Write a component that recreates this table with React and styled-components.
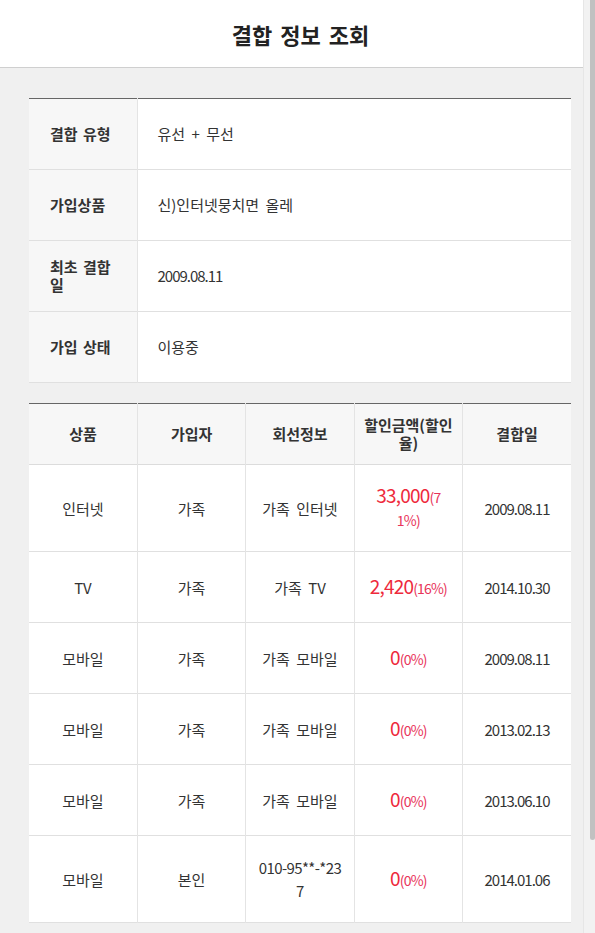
import React from "react";
import styled, { createGlobalStyle } from "styled-components";

const GlobalStyle = createGlobalStyle`
  html, body { margin: 0; padding: 0; background: #f0f0f0; }
  body {
    font-family: "Noto Sans CJK KR", "Noto Sans", sans-serif;
    color: #333;
  }
`;

const Page = styled.div`
  padding-right: 12px;
`;

const ScrollTrack = styled.div`
  position: fixed;
  top: 0;
  right: 0;
  bottom: 0;
  width: 12px;
  box-sizing: border-box;
  background: #f2f2f2;
  border-left: 1px solid #e6e6e6;
  display: flex;
  justify-content: flex-end;
`;

const ScrollThumb = styled.div`
  width: 5px;
  height: 840px;
  background: #c1c1c1;
  border-radius: 0 0 3px 3px;
`;

const Header = styled.header`
  height: 68px;
  box-sizing: border-box;
  padding-left: 18px;
  background: #fff;
  border-bottom: 1px solid #cfcfcf;
  display: flex;
  align-items: center;
  justify-content: center;
`;

const Title = styled.h1`
  margin: 0;
  font-size: 22px;
  font-weight: 700;
  color: #222;
  word-spacing: 3px;
`;

const Content = styled.main`
  padding: 30px 12px 113px 29px;
  display: flex;
  flex-direction: column;
  gap: 20px;
`;

const Table = styled.table`
  width: 100%;
  border-collapse: collapse;
  table-layout: fixed;
  background: #fff;
  border-top: 1px solid #666;
`;

const InfoRow = styled.tr`
  border-bottom: 1px solid #e0e0e0;
`;

const Label = styled.th`
  width: 108px;
  height: 71px;
  box-sizing: border-box;
  padding: 0 20px 0 21px;
  background: #f7f7f7;
  border-right: 1px solid #e4e4e4;
  text-align: left;
  font-size: 15px;
  font-weight: 700;
  line-height: 18px;
  word-spacing: 2px;
  color: #333;
`;

const Value = styled.td`
  padding: 0 20px;
  font-size: 15px;
  line-height: 20px;
  color: #333;
  word-spacing: 3px;
  letter-spacing: ${(p) => (p.$num ? "-1px" : "0")};
`;

const HeadRow = styled.tr`
  background: #f7f7f7;
  border-bottom: 1px solid #dcdcdc;
`;

const HeadCell = styled.th`
  height: 61px;
  box-sizing: border-box;
  padding: 8px 6px;
  font-size: 15px;
  font-weight: 600;
  line-height: 18px;
  color: #333;
  text-align: center;
  border-left: 1px solid #e4e4e4;
  word-break: break-all;
  &:first-child { border-left: none; }
`;

const BodyRow = styled.tr`
  border-bottom: 1px solid #e0e0e0;
`;

const Cell = styled.td`
  height: 71px;
  box-sizing: border-box;
  padding: 20px 12px;
  font-size: 15px;
  line-height: 23px;
  color: #333;
  text-align: center;
  border-left: 1px solid #e4e4e4;
  word-break: break-all;
  word-spacing: 3px;
  letter-spacing: ${(p) => (p.$num ? "-1px" : p.$phone ? "-0.6px" : "0")};
  &:first-child { border-left: none; }
`;

const Amount = styled.span`
  color: #ee2a3c;
  font-size: 19px;
  line-height: 19px;
  letter-spacing: -0.8px;
`;

const Rate = styled.span`
  color: #e8345a;
  font-size: 14px;
  line-height: 19px;
  letter-spacing: -0.8px;
`;

const info = [
  ["결합 유형", "유선 + 무선"],
  ["가입상품", "신)인터넷뭉치면 올레"],
  ["최초 결합 일", "2009.08.11", true],
  ["가입 상태", "이용중"],
];

const rows = [
  ["인터넷", "가족", "가족 인터넷", "33,000", "(71%)", "2009.08.11"],
  ["TV", "가족", "가족 TV", "2,420", "(16%)", "2014.10.30"],
  ["모바일", "가족", "가족 모바일", "0", "(0%)", "2009.08.11"],
  ["모바일", "가족", "가족 모바일", "0", "(0%)", "2013.02.13"],
  ["모바일", "가족", "가족 모바일", "0", "(0%)", "2013.06.10"],
  ["모바일", "본인", "010-95**-*237", "0", "(0%)", "2014.01.06", true],
];

export default function App() {
  return (
    <Page>
      <GlobalStyle />
      <Header>
        <Title>결합 정보 조회</Title>
      </Header>
      <Content>
        <Table>
          <tbody>
            {info.map(([k, v, num]) => (
              <InfoRow key={k}>
                <Label>{k}</Label>
                <Value $num={num}>{v}</Value>
              </InfoRow>
            ))}
          </tbody>
        </Table>
        <Table>
          <thead>
            <HeadRow>
              <HeadCell>상품</HeadCell>
              <HeadCell>가입자</HeadCell>
              <HeadCell>회선정보</HeadCell>
              <HeadCell>할인금액(할인율)</HeadCell>
              <HeadCell>결합일</HeadCell>
            </HeadRow>
          </thead>
          <tbody>
            {rows.map(([p, who, line, amt, rate, date, phone], i) => (
              <BodyRow key={i}>
                <Cell>{p}</Cell>
                <Cell>{who}</Cell>
                <Cell $phone={phone}>{line}</Cell>
                <Cell>
                  <Amount>{amt}</Amount>
                  <Rate>{rate}</Rate>
                </Cell>
                <Cell $num>{date}</Cell>
              </BodyRow>
            ))}
          </tbody>
        </Table>
      </Content>
      <ScrollTrack>
        <ScrollThumb />
      </ScrollTrack>
    </Page>
  );
}
